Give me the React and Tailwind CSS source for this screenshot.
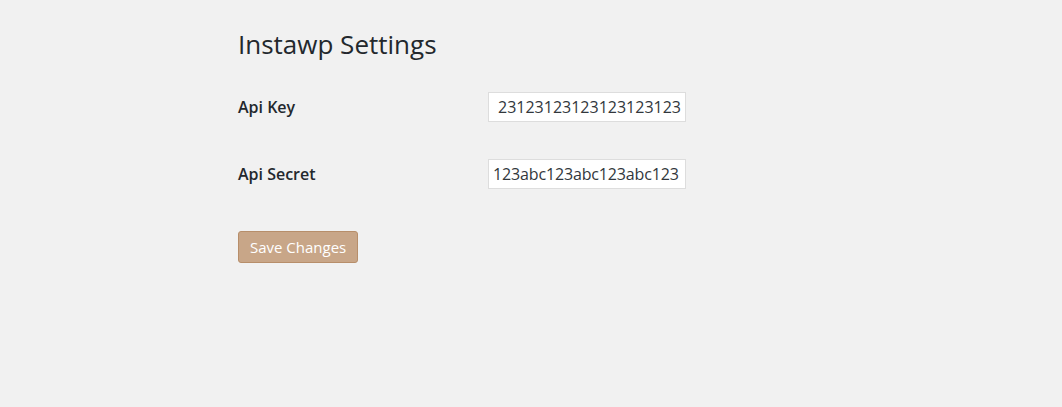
export default function App() {
  return (
    <div className="min-h-[407px] w-full bg-[#f1f1f1] font-['Open_Sans',sans-serif] text-[#23282d]">
      <div className="pl-[238px] pt-[27px]">
        <h1 className="text-[26px] leading-[34px] font-normal">Instawp Settings</h1>

        <div className="mt-[31px] flex flex-col gap-[37px]">
          <div className="flex items-center">
            <label className="w-[250px] text-[16px] font-semibold">Api Key</label>
            <div className="flex h-[30px] w-[198px] items-center overflow-hidden border border-[#dddddd] bg-white pl-[9px] text-[16px] text-[#32373c]">
              <span className="whitespace-nowrap">23123123123123123123</span>
            </div>
          </div>
          <div className="flex items-center">
            <label className="w-[250px] text-[16px] font-semibold">Api Secret</label>
            <div className="flex h-[30px] w-[198px] items-center overflow-hidden border border-[#dddddd] bg-white pl-[4px] text-[16px] text-[#32373c]">
              <span className="whitespace-nowrap tracking-[-0.15px]">123abc123abc123abc123</span>
            </div>
          </div>
        </div>

        <button className="mt-[42px] h-[32px] rounded-[3px] border border-[#b78e6a] bg-[#c8a688] px-[11px] text-[15px] text-white">
          Save Changes
        </button>
      </div>
    </div>
  );
}
